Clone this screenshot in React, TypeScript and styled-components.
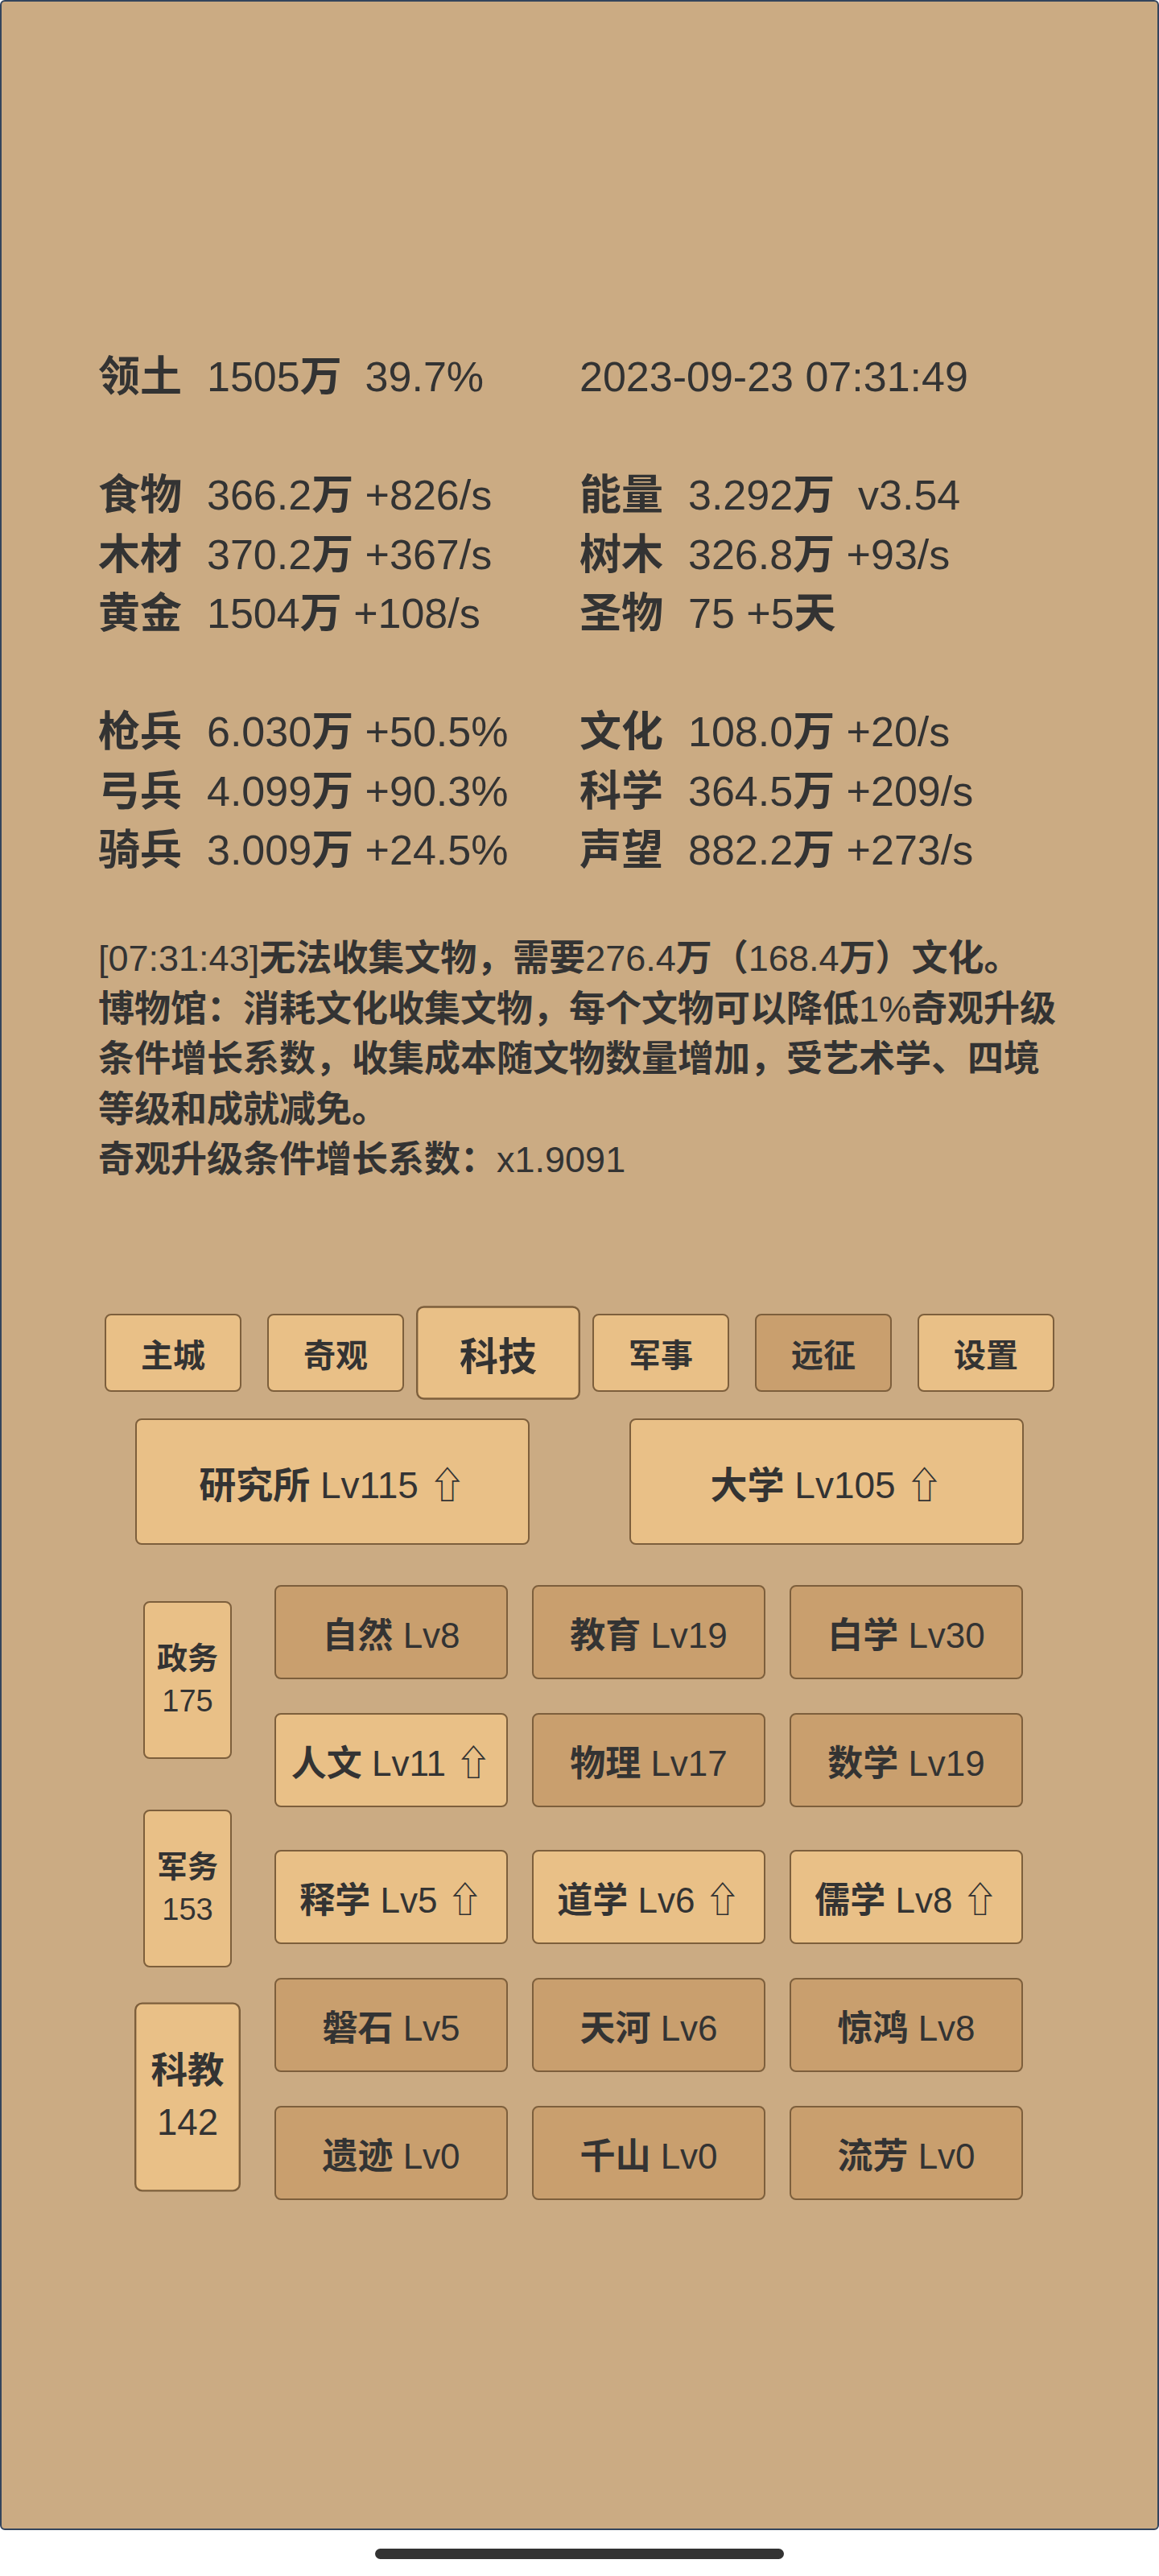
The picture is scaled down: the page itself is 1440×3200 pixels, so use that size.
import React from "react";
import styled, { createGlobalStyle } from "styled-components";

const GlobalStyle = createGlobalStyle`
    html, body {
        margin: 0;
        padding: 0;
        background: #ffffff;
    }
    body {
        font-family: "Liberation Sans", "Noto Sans CJK SC", "DejaVu Sans", sans-serif;
        font-weight: 700;
        color: #333333;
    }
`;

interface ActiveProps {
    $active?: boolean;
}
interface FillProps {
    $upgradable?: boolean;
}

const Screen = styled.div`
    width: 1440px;
    height: 3200px;
    display: flex;
    flex-direction: column;
    background: #ffffff;
`;

const Panel = styled.div`
    box-sizing: border-box;
    height: 3143px;
    border: 2px solid #33445c;
    border-radius: 6px;
    background: #cbab83;
    padding: 430px 120px 0;
    display: flex;
    flex-direction: column;
`;

// CJK is drawn heavy, latin digits and letters stay regular
const Latin = styled.span`
    font-weight: 400;
`;

const Stats = styled.div`
    display: flex;
    flex-direction: column;
    gap: 73.5px;
    font-size: 52px;
    line-height: 73.5px;
`;

const StatGroup = styled.div`
    display: grid;
    grid-template-columns: 1fr 1fr;
`;

const StatCell = styled.div`
    display: flex;
    white-space: pre;
    height: 73.5px;
`;

const StatLabel = styled.span`
    width: 135px;
    flex-shrink: 0;
`;

const StatText = styled.span`
    white-space: pre;
`;

const Message = styled.div`
    margin-top: 66.5px;
    font-size: 45px;
    line-height: 62.5px;
`;

const TabRow = styled.div`
    margin-top: 159.5px;
    display: flex;
    justify-content: center;
    gap: 32px;
`;

const BaseButton = styled.div<FillProps>`
    box-sizing: border-box;
    display: flex;
    align-items: center;
    justify-content: center;
    white-space: pre;
    border: 2px solid #7d5f3c;
    border-radius: 8px;
    background: ${(props) => (props.$upgradable ? "#e9c087" : "#c99f6e")};
`;

const Tab = styled(BaseButton)<ActiveProps>`
    width: 170px;
    height: 97px;
    font-size: 40px;
    transform: ${(props) => (props.$active ? "scale(1.2)" : "none")};
`;

const BuildingRow = styled.div`
    margin-top: 33px;
    display: flex;
    justify-content: center;
    gap: 124px;
`;

const BuildingButton = styled(BaseButton)`
    width: 490px;
    height: 157px;
    font-size: 46px;
`;

const TechArea = styled.div`
    margin-top: 50px;
    margin-left: 56px;
    display: flex;
    align-items: flex-start;
    gap: 53px;
`;

const BranchColumn = styled.div`
    padding-top: 20px;
    display: flex;
    flex-direction: column;
    gap: 63px;
`;

const Branch = styled(BaseButton)<ActiveProps>`
    width: 110px;
    height: 196px;
    flex-direction: column;
    font-size: 38px;
    line-height: 53px;
    transform: ${(props) => (props.$active ? "scale(1.2)" : "none")};
`;

const TechColumn = styled.div`
    display: flex;
    flex-direction: column;
    gap: 42px;
`;

const TechRow = styled.div<{ $extraTop?: boolean }>`
    display: grid;
    grid-template-columns: repeat(3, 290px);
    gap: 30px;
    margin-top: ${(props) => (props.$extraTop ? "11px" : "0")};
`;

const TechButton = styled(BaseButton)`
    height: 117px;
    font-size: 44px;
`;

const HomeBar = styled.div`
    align-self: center;
    margin-top: 23px;
    width: 508px;
    height: 13px;
    border-radius: 7px;
    background: #333333;
`;

const latinRun = /([^\u3000-\u303f\u4e00-\u9fff\uff00-\uffef]+)/;

const T = ({ children }: { children: string }) => (
    <>
        {children.split(latinRun).map((part, i) =>
            i % 2 === 1 ? <Latin key={i}>{part}</Latin> : part
        )}
    </>
);

type Stat = { label?: string; text: string };

const statGroups: Stat[][][] = [
    [[{ label: "领土", text: "1505万  39.7%" }, { text: "2023-09-23 07:31:49" }]],
    [
        [{ label: "食物", text: "366.2万 +826/s" }, { label: "能量", text: "3.292万  v3.54" }],
        [{ label: "木材", text: "370.2万 +367/s" }, { label: "树木", text: "326.8万 +93/s" }],
        [{ label: "黄金", text: "1504万 +108/s" }, { label: "圣物", text: "75 +5天" }],
    ],
    [
        [{ label: "枪兵", text: "6.030万 +50.5%" }, { label: "文化", text: "108.0万 +20/s" }],
        [{ label: "弓兵", text: "4.099万 +90.3%" }, { label: "科学", text: "364.5万 +209/s" }],
        [{ label: "骑兵", text: "3.009万 +24.5%" }, { label: "声望", text: "882.2万 +273/s" }],
    ],
];

const messages = [
    "[07:31:43]无法收集文物，需要276.4万（168.4万）文化。",
    "博物馆：消耗文化收集文物，每个文物可以降低1%奇观升级条件增长系数，收集成本随文物数量增加，受艺术学、四境等级和成就减免。",
    "奇观升级条件增长系数：x1.9091",
];

const tabs = [
    { name: "主城", upgradable: true },
    { name: "奇观", upgradable: true },
    { name: "科技", upgradable: true, active: true },
    { name: "军事", upgradable: true },
    { name: "远征", upgradable: false },
    { name: "设置", upgradable: true },
];

const branches = [
    { name: "政务", count: 175 },
    { name: "军务", count: 153 },
    { name: "科教", count: 142, active: true },
];

type Tech = { name: string; level: number; up?: boolean };

const techRows: Tech[][] = [
    [
        { name: "自然", level: 8 },
        { name: "教育", level: 19 },
        { name: "白学", level: 30 },
    ],
    [
        { name: "人文", level: 11, up: true },
        { name: "物理", level: 17 },
        { name: "数学", level: 19 },
    ],
    [
        { name: "释学", level: 5, up: true },
        { name: "道学", level: 6, up: true },
        { name: "儒学", level: 8, up: true },
    ],
    [
        { name: "磐石", level: 5 },
        { name: "天河", level: 6 },
        { name: "惊鸿", level: 8 },
    ],
    [
        { name: "遗迹", level: 0 },
        { name: "千山", level: 0 },
        { name: "流芳", level: 0 },
    ],
];

const App = () => {
    return (
        <>
            <GlobalStyle />
            <Screen>
                <Panel>
                    <Stats>
                        {statGroups.map((group, gi) => (
                            <div key={gi}>
                                {group.map((row, ri) => (
                                    <StatGroup key={ri}>
                                        {row.map((cell, ci) => (
                                            <StatCell key={ci}>
                                                {cell.label && <StatLabel>{cell.label}</StatLabel>}
                                                <StatText>
                                                    <T>{cell.text}</T>
                                                </StatText>
                                            </StatCell>
                                        ))}
                                    </StatGroup>
                                ))}
                            </div>
                        ))}
                    </Stats>

                    <Message>
                        {messages.map((m, i) => (
                            <div key={i}>
                                <T>{m}</T>
                            </div>
                        ))}
                    </Message>

                    <TabRow>
                        {tabs.map((tab) => (
                            <Tab key={tab.name} $upgradable={tab.upgradable} $active={tab.active}>
                                {tab.name}
                            </Tab>
                        ))}
                    </TabRow>

                    <BuildingRow>
                        <BuildingButton $upgradable>
                            <span>
                                <T>研究所 Lv115 ⇧</T>
                            </span>
                        </BuildingButton>
                        <BuildingButton $upgradable>
                            <span>
                                <T>大学 Lv105 ⇧</T>
                            </span>
                        </BuildingButton>
                    </BuildingRow>

                    <TechArea>
                        <BranchColumn>
                            {branches.map((b) => (
                                <Branch key={b.name} $upgradable $active={b.active}>
                                    <span>{b.name}</span>
                                    <Latin>{b.count}</Latin>
                                </Branch>
                            ))}
                        </BranchColumn>
                        <TechColumn>
                            {techRows.map((row, ri) => (
                                <TechRow key={ri} $extraTop={ri === 2}>
                                    {row.map((t) => (
                                        <TechButton key={t.name} $upgradable={t.up}>
                                            <span>
                                                <T>{`${t.name} Lv${t.level}${t.up ? " ⇧" : ""}`}</T>
                                            </span>
                                        </TechButton>
                                    ))}
                                </TechRow>
                            ))}
                        </TechColumn>
                    </TechArea>
                </Panel>
                <HomeBar />
            </Screen>
        </>
    );
};

export default App;
